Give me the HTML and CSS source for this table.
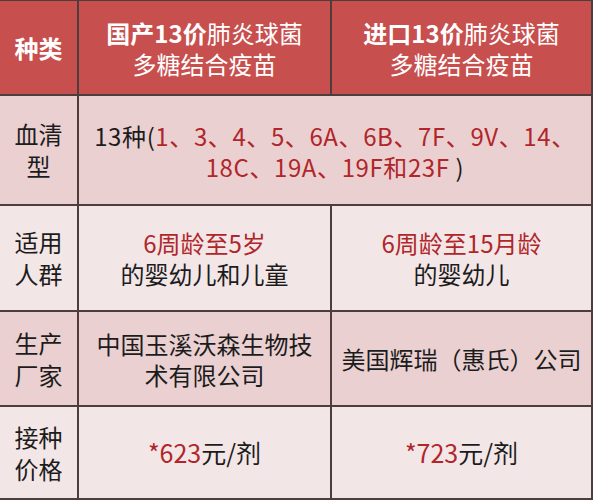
FILE: index.html
```html
<!DOCTYPE html>
<html lang="zh-CN">
<head>
<meta charset="utf-8">
<title>13价肺炎球菌多糖结合疫苗对比</title>
<link rel="stylesheet" href="styles.css">
</head>
<body>
<div class="table">
  <div class="cell head"><b>种类</b></div>
  <div class="cell head"><span><b>国产13价</b>肺炎球菌<br>多糖结合疫苗</span></div>
  <div class="cell head"><span><b>进口13价</b>肺炎球菌<br>多糖结合疫苗</span></div>

  <div class="cell label dark">血清<br>型</div>
  <div class="cell dark span2 sero"><span>13种(<em>1、3、4、5、6A、6B、7F、9V、14、<br>18C、19A、19F和23F</em> )</span></div>

  <div class="cell label light">适用<br>人群</div>
  <div class="cell light"><span><em>6周龄至5岁</em><br>的婴幼儿和儿童</span></div>
  <div class="cell light"><span><em>6周龄至15月龄</em><br>的婴幼儿</span></div>

  <div class="cell label dark">生产<br>厂家</div>
  <div class="cell dark"><span>中国玉溪沃森生物技<br>术有限公司</span></div>
  <div class="cell dark"><span>美国辉瑞（惠氏）公司</span></div>

  <div class="cell label light">接种<br>价格</div>
  <div class="cell light price"><span><em>*623</em>元/剂</span></div>
  <div class="cell light price"><span><em>*723</em>元/剂</span></div>
</div>
</body>
</html>
```

FILE: styles.css
```css
html, body {
  margin: 0;
  padding: 0;
  background: #f3e6e7;
}

body {
  width: 593px;
  height: 500px;
  overflow: hidden;
  font-family: "Noto Sans CJK SC", "Noto Sans", sans-serif;
  font-size: 24px;
  line-height: 31px;
  color: #1c1c1c;
}

.table {
  display: grid;
  grid-template-columns: 77px 251px 259px;
  grid-template-rows: 93px 108px 104px 93px 91px;
  gap: 2px;
  padding: 1px 2px 2px 0;
  background: #4d3d3d;
  width: 593px;
  height: 500px;
  box-sizing: border-box;
}

.cell {
  display: flex;
  align-items: center;
  justify-content: center;
  text-align: center;
}

.head {
  background: #c74f4e;
  color: #ffffff;
}

.head b {
  font-weight: 700;
}

.dark {
  background: #ebd0d1;
}

.light {
  background: #f3e6e7;
}

.span2 {
  grid-column: 2 / 4;
}

.sero {
  letter-spacing: 0.6px;
  padding-top: 2px;
}

.price {
  font-size: 25px;
}

.label {
  line-height: 32px;
}

em {
  font-style: normal;
  color: #b0262a;
}
```
